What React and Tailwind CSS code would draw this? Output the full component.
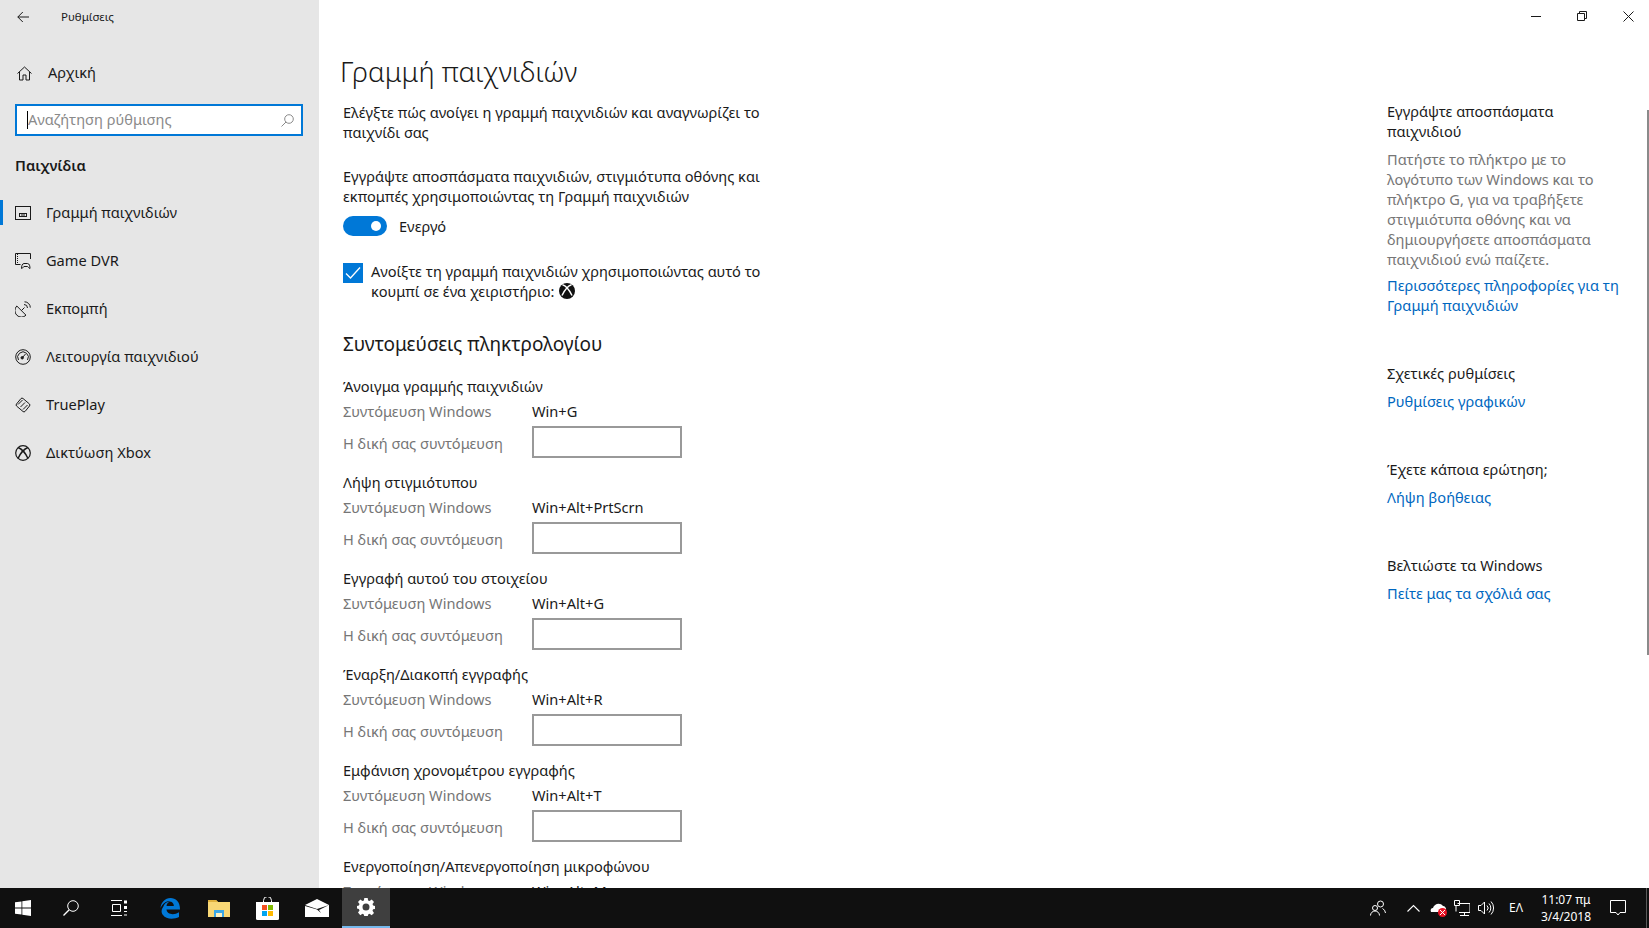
const font = { fontFamily: '"Noto Sans", sans-serif' };

const navItems = [
  { label: 'Γραμμή παιχνιδιών', icon: 'bar', active: true },
  { label: 'Game DVR', icon: 'dvr' },
  { label: 'Εκπομπή', icon: 'broadcast' },
  { label: 'Λειτουργία παιχνιδιού', icon: 'mode' },
  { label: 'TruePlay', icon: 'trueplay' },
  { label: 'Δικτύωση Xbox', icon: 'xbox' },
];

const shortcuts = [
  { title: 'Άνοιγμα γραμμής παιχνιδιών', keys: 'Win+G' },
  { title: 'Λήψη στιγμιότυπου', keys: 'Win+Alt+PrtScrn' },
  { title: 'Εγγραφή αυτού του στοιχείου', keys: 'Win+Alt+G' },
  { title: 'Έναρξη/Διακοπή εγγραφής', keys: 'Win+Alt+R' },
  { title: 'Εμφάνιση χρονομέτρου εγγραφής', keys: 'Win+Alt+T' },
  { title: 'Ενεργοποίηση/Απενεργοποίηση μικροφώνου', keys: 'Win+Alt+M' },
];

const asideBlocks = [
  { title: 'Σχετικές ρυθμίσεις', link: 'Ρυθμίσεις γραφικών' },
  { title: 'Έχετε κάποια ερώτηση;', link: 'Λήψη βοήθειας' },
  { title: 'Βελτιώστε τα Windows', link: 'Πείτε μας τα σχόλιά σας' },
];

function NavIcon({ name }) {
  const props = { width: 16, height: 16, viewBox: '0 0 16 16', fill: 'none', stroke: '#1a1a1a', strokeWidth: 1 };
  if (name === 'bar') {
    return (
      <svg {...props}>
        <rect x="0.5" y="1.5" width="15" height="13" />
        <rect x="4.5" y="8.5" width="7" height="3" />
        <path d="M7 9v2M9 9v2" />
      </svg>
    );
  }
  if (name === 'dvr') {
    return (
      <svg {...props}>
        <path d="M5.500 11.500H.5v-11h15V6" />
        <path d="M2.500 1v10" strokeDasharray="1 1" />
        <path d="M6.500 15.500c0-2 .5-5 2.500-5h3.500c2 0 2.500 3 2.500 5-1 0-1.500-1.500-2.500-2H9c-1 .5-1.500 2-2.500 2z" />
      </svg>
    );
  }
  if (name === 'broadcast') {
    return (
      <svg {...props}>
        <path d="M1.800 5L11 14.200A6.300 6.300 0 0 1 1.800 5z" />
        <path d="M6.500 9.500l3-3" />
        <path d="M9 3.500a3.500 3.500 0 0 1 3.500 3.500M9.500.8a5.800 5.800 0 0 1 5.800 5.800" />
      </svg>
    );
  }
  if (name === 'mode') {
    return (
      <svg {...props}>
        <circle cx="8" cy="8" r="7.300" />
        <path d="M3.500 11a5.300 5.300 0 1 1 9 0" />
        <circle cx="7.200" cy="8.800" r="1.200" fill="#1a1a1a" />
        <path d="M7.500 8.500L10.500 5" />
      </svg>
    );
  }
  if (name === 'trueplay') {
    return (
      <svg {...props}>
        <path d="M6 1.500a1.500 1.500 0 0 1 2 0L14.500 7a1.500 1.500 0 0 1 0 2L10 14.500a1.500 1.500 0 0 1-2 0L1.500 9a1.500 1.500 0 0 1 0-2z" />
        <path d="M3 7.500L7.500 3M5.500 10L10 5.500M8 12.500l4.500-4.500" />
      </svg>
    );
  }
  return (
    <svg {...props} strokeWidth="1.200">
      <circle cx="8" cy="8" r="7.300" />
      <path d="M3 2.500C6 3.500 10.500 8 13 13.500M13 2.500C10 3.500 5.500 8 3 13.500" strokeWidth="1.400" />
    </svg>
  );
}

function Toggle() {
  return (
    <div className="flex h-5 w-11 items-center justify-end rounded-full bg-[#0078d7] pr-[6px]">
      <div className="h-[10px] w-[10px] rounded-full bg-white" />
    </div>
  );
}

function ShortcutGroup({ title, keys }) {
  return (
    <div className="h-24 shrink-0">
      <div className="h-[29px] leading-5 text-[#1a1a1a]">{title}</div>
      <div className="flex h-[14px] items-center">
        <span className="w-[189px] text-[#767676]">Συντόμευση Windows</span>
        <span className="text-[#1a1a1a]">{keys}</span>
      </div>
      <div className="mt-[1px] flex items-center">
        <span className="mt-[11px] w-[189px] text-[#767676]">Η δική σας συντόμευση</span>
        <div className="mt-[6px] h-8 w-[150px] border-2 border-[#999999] bg-white" />
      </div>
    </div>
  );
}

function Sidebar() {
  return (
    <aside className="flex w-[319px] shrink-0 flex-col bg-[#e6e6e6] text-[14.6px] text-[#1a1a1a]">
      <div className="flex h-[33px] items-center pl-[17px]">
        <svg width="12" height="12" viewBox="0 0 12 12" fill="none" stroke="#1a1a1a" strokeWidth="1">
          <path d="M12 6H.8M5.800 1L.8 6l5 5" />
        </svg>
        <span className="ml-8 text-[11.5px]">Ρυθμίσεις</span>
      </div>
      <div className="mt-5 flex h-10 items-center pl-[17px]">
        <svg width="15" height="15" viewBox="0 0 15 15" fill="none" stroke="#1a1a1a" strokeWidth="1">
          <path d="M.5 7.500L7.500 1l7 6.500M2.500 6v8h3.500V9h3v5h3.500V6" />
        </svg>
        <span className="ml-4">Αρχική</span>
      </div>
      <div className="mt-[11px] mr-4 ml-[15px] flex h-8 items-center border-2 border-[#0078d7] bg-white pr-[7px] pl-[10px]">
        <div className="h-[18px] w-px bg-black" />
        <span className="flex-1 pb-[1px] text-[#8a8a8a]">Αναζήτηση ρύθμισης</span>
        <svg width="13" height="13" viewBox="0 0 13 13" fill="none" stroke="#8a8a8a" strokeWidth="1">
          <circle cx="8" cy="5" r="4.300" />
          <path d="M5 8l-4.500 4.500" />
        </svg>
      </div>
      <div className="mt-[18px] flex h-6 items-center pl-[15px] font-semibold">Παιχνίδια</div>
      <nav className="mt-[11px] flex flex-col">
        {navItems.map((item) => (
          <div key={item.label} className="relative flex h-12 items-center pl-[15px]">
            {item.active && <div className="absolute top-[11px] left-0 h-[25px] w-[3px] bg-[#0078d7]" />}
            <NavIcon name={item.icon} />
            <span className="ml-[15px]">{item.label}</span>
          </div>
        ))}
      </nav>
    </aside>
  );
}

function Content() {
  return (
    <div className="w-[420px] shrink-0 pl-[24px]">
      <h1 className="-ml-[3px] text-[27.5px] leading-9 font-light text-[#1a1a1a]">Γραμμή παιχνιδιών</h1>
      <p className="mt-[12px] leading-5 whitespace-nowrap">
        Ελέγξτε πώς ανοίγει η γραμμή παιχνιδιών και αναγνωρίζει το
        <br />
        παιχνίδι σας
      </p>
      <p className="mt-[24px] leading-5 whitespace-nowrap">
        Εγγράψτε αποσπάσματα παιχνιδιών, στιγμιότυπα οθόνης και
        <br />
        εκπομπές χρησιμοποιώντας τη Γραμμή παιχνιδιών
      </p>
      <div className="mt-[9px] flex items-center gap-3">
        <Toggle />
        <span className="pt-[1px]">Ενεργό</span>
      </div>
      <div className="mt-[25px] flex items-start gap-2">
        <div className="flex h-5 w-5 shrink-0 items-center justify-center bg-[#0078d7]">
          <svg width="16" height="14" viewBox="0 0 16 14" fill="none" stroke="white" strokeWidth="1.300">
            <path d="M1 7.500l4.500 4.500L15 1.500" />
          </svg>
        </div>
        <div className="-mt-[2px] leading-5 whitespace-nowrap">
          Ανοίξτε τη γραμμή παιχνιδιών χρησιμοποιώντας αυτό το
          <br />
          <span className="inline-flex items-center gap-[5px]">
            κουμπί σε ένα χειριστήριο:
            <svg width="16" height="16" viewBox="0 0 16 16">
              <circle cx="8" cy="8" r="8" fill="#111" />
              <path d="M3.500 1.800C6 2.500 10 6.500 13 12.500M12.500 1.800C10 2.500 6 6.500 3 12.500" fill="none" stroke="white" strokeWidth="1.500" />
            </svg>
          </span>
        </div>
      </div>
      <h2 className="mt-[29px] text-[19px] leading-7 whitespace-nowrap text-[#1a1a1a]">Συντομεύσεις πληκτρολογίου</h2>
      <div className="mt-[18px] flex flex-col whitespace-nowrap">
        {shortcuts.map((s) => (
          <ShortcutGroup key={s.title} title={s.title} keys={s.keys} />
        ))}
      </div>
    </div>
  );
}

function RightColumn() {
  return (
    <div className="mt-[101px] w-[262px] shrink-0">
      <div className="leading-5">
        Εγγράψτε αποσπάσματα
        <br />
        παιχνιδιού
      </div>
      <p className="mt-2 leading-5 whitespace-nowrap text-[#767676]">
        Πατήστε το πλήκτρο με το
        <br />
        λογότυπο των Windows και το
        <br />
        πλήκτρο G, για να τραβήξετε
        <br />
        στιγμιότυπα οθόνης και να
        <br />
        δημιουργήσετε αποσπάσματα
        <br />
        παιχνιδιού ενώ παίζετε.
      </p>
      <div className="mt-[6px] leading-5 whitespace-nowrap text-[#0067c0]">
        Περισσότερες πληροφορίες για τη
        <br />
        Γραμμή παιχνιδιών
      </div>
      {asideBlocks.map((b) => (
        <div key={b.title} className="mt-[48px] first:mt-[57px]">
          <div className="leading-5">{b.title}</div>
          <div className="mt-2 leading-5 text-[#0067c0]">{b.link}</div>
        </div>
      ))}
    </div>
  );
}

function WindowButtons() {
  return (
    <div className="absolute top-0 -right-[2px] flex h-8">
      <div className="flex w-[46px] items-center justify-center">
        <svg width="10" height="10" viewBox="0 0 10 10" stroke="#1a1a1a"><path d="M0 5.500h10" /></svg>
      </div>
      <div className="flex w-[46px] items-center justify-center">
        <svg width="10" height="10" viewBox="0 0 10 10" fill="none" stroke="#1a1a1a">
          <path d="M.5 2.500h7v7h-7zM2.500 2.500v-2h7v7h-2" />
        </svg>
      </div>
      <div className="flex w-[46px] items-center justify-center">
        <svg width="11" height="11" viewBox="0 0 11 11" stroke="#1a1a1a"><path d="M.5.5l10 10M10.500.5l-10 10" /></svg>
      </div>
    </div>
  );
}

function Taskbar() {
  return (
    <footer className="flex h-10 shrink-0 items-center bg-[#101010] text-white">
      <div className="flex w-[46px] justify-center">
        <svg width="16" height="16" viewBox="0 0 16 16" fill="white">
          <path d="M0 2.300l6.500-.9v6.200H0zM7.300 1.300L16 0v7.600H7.300zM0 8.400h6.500v6.200L0 13.700zM7.300 8.400H16V16l-8.700-1.300z" />
        </svg>
      </div>
      <div className="flex w-[50px] justify-center">
        <svg width="16" height="16" viewBox="0 0 16 16" fill="none" stroke="white" strokeWidth="1">
          <circle cx="10" cy="6" r="5.300" />
          <path d="M6.200 9.800L.5 15.500" strokeWidth="1.300" />
        </svg>
      </div>
      <div className="flex w-12 justify-center pr-[2px]">
        <svg width="16" height="16" viewBox="0 0 16 16" fill="none" stroke="white" strokeWidth="1">
          <path d="M0 .5h11M0 15.500h11M1.500 4.500h8v7h-8z" />
          <path d="M13 .5h3v3h-3zM13 6h3v3h-3z" fill="white" stroke="none" />
          <path d="M13 11.500h3M13 15h3" />
        </svg>
      </div>
      <div className="flex w-[52px] justify-center">
        <svg width="20" height="21" viewBox="0 0 20 21">
          <path d="M10.500 0C15.500 0 20 3.500 20 11.500H6.500c.3 5 7.500 6 12.500 2.800v4.800c-5 2.500-13 2.500-16-2C.5 14 1.500 10 4.500 7.500 3 10 3 10 3 10 4 4 9 3.500 11 3.500c-3 .3-4.300 2.500-4.500 4.500h7.300C14 5 11 2.700 7.800 3.300 5 3.800 2 6.500.5 10 1 4.500 5 0 10.500 0z" fill="#0078d7" />
        </svg>
      </div>
      <div className="flex w-[46px] justify-center">
        <svg width="22" height="18" viewBox="0 0 22 18">
          <path d="M0 1h8l2 2h12v15H0z" fill="#f8d775" />
          <path d="M0 1h8l2 2H6L5 3H0z" fill="#e0b13d" />
          <path d="M6 11h10v7h-2v-4H8v4H6z" fill="#3ba7e6" />
          <path d="M8 14h6v4H8z" fill="#fdf0c0" />
        </svg>
      </div>
      <div className="flex w-[50px] justify-center">
        <svg width="23" height="23" viewBox="0 0 23 23">
          <path d="M7.500 5V3.500a4 4 0 0 1 8 0V5" fill="none" stroke="white" strokeWidth="1" />
          <path d="M0 5h23v16.500a1.500 1.500 0 0 1-1.500 1.500h-20A1.500 1.500 0 0 1 0 21.500z" fill="white" />
          <path d="M6 8h5v5H6z" fill="#f25022" />
          <path d="M12 8h5v5h-5z" fill="#7fba00" />
          <path d="M6 14h5v5H6z" fill="#00a4ef" />
          <path d="M12 14h5v5h-5z" fill="#ffb900" />
        </svg>
      </div>
      <div className="flex w-[50px] justify-center">
        <svg width="24" height="18" viewBox="0 0 24 18">
          <path d="M12 0l12 6v12H0V6z" fill="white" />
          <path d="M0 6l12 4 12-4-10 5 2 3-4-3.500L0 7z" fill="#101010" />
        </svg>
      </div>
      <div className="flex h-10 w-12 items-center justify-center border-b-2 border-[#76b9ed] bg-[#3f3f3f]">
        <svg width="18" height="18" viewBox="0 0 18 18" fill="white">
          <path fillRule="evenodd" d="M7.300 0h3.400l.4 2.500 1.500.6L14.700 1.600 17 4l-1.500 2.100.6 1.500 2.500.4v2.900l-2.500.4-.6 1.500 1.500 2.100-2.300 2.400-2.100-1.500-1.500.6-.4 2.500H7.300l-.4-2.500-1.500-.6-2.100 1.500L1 14.500l1.500-2.100-.6-1.500-2.500-.4V8l2.500-.4.6-1.500L1 4l2.300-2.400 2.100 1.500 1.500-.6zM9 5.500a3.500 3.500 0 1 0 0 7 3.500 3.500 0 0 0 0-7z" />
        </svg>
      </div>
      <div className="flex flex-1 items-center justify-end">
        <svg width="16" height="16" viewBox="0 0 16 16" fill="none" stroke="white" strokeWidth="1">
          <circle cx="10.500" cy="4" r="3" />
          <path d="M15.500 13a5.500 5.500 0 0 0-3-4.500" />
          <circle cx="5" cy="8" r="2.500" />
          <path d="M.5 15.500a4.500 4.500 0 0 1 9 0" />
        </svg>
        <svg className="ml-[21px]" width="13" height="8" viewBox="0 0 13 8" fill="none" stroke="white" strokeWidth="1.100">
          <path d="M.5 7.500l6-6 6 6" />
        </svg>
        <div className="relative ml-[10px] h-4 w-4">
          <svg width="16" height="14" viewBox="0 0 16 14" fill="white">
            <path d="M1 12c-1-2 0-4 2-4 1-4 7-6 10-2 2 0 3 2 3 3l-1 3z" />
          </svg>
          <div className="absolute right-[-1px] bottom-[-1px] flex h-[9px] w-[9px] items-center justify-center rounded-full bg-[#e81123]">
            <svg width="5" height="5" viewBox="0 0 5 5" stroke="white"><path d="M0 0l5 5M5 0L0 5" /></svg>
          </div>
        </div>
        <svg className="ml-2" width="16" height="16" viewBox="0 0 16 16" fill="none" stroke="white" strokeWidth="1">
          <path d="M3.500 3.500H16v9H5M10.500 12.500v3M6 15.500h9" />
          <path d="M.5.500h5v5h-5zM2 5.500v6" />
        </svg>
        <svg className="ml-2" width="16" height="16" viewBox="0 0 16 16" fill="none" stroke="white" strokeWidth="1">
          <path d="M.5 5.500h2.500L6.500 2v12L3 10.500H.5z" />
          <path d="M9 5.500a3.500 3.500 0 0 1 0 5M11 3.500a6.500 6.500 0 0 1 0 9M13 1.500a9.500 9.500 0 0 1 0 13" />
        </svg>
        <span className="ml-[15px] text-xs">ΕΛ</span>
        <div className="ml-[13px] flex w-[60px] flex-col items-center text-xs leading-[17px]">
          <span>11:07 πμ</span>
          <span>3/4/2018</span>
        </div>
        <svg className="ml-[14px]" width="16" height="16" viewBox="0 0 16 16" fill="none" stroke="white" strokeWidth="1">
          <path d="M.5.500h15v12H10L8 15l-2-2.500H.5z" />
        </svg>
        <div className="ml-5 h-10 w-px bg-[#5a5a5a]" />
        <div className="w-[2px]" />
      </div>
    </footer>
  );
}

export default function App() {
  return (
    <div className="flex h-[928px] w-[1649px] flex-col overflow-hidden bg-white text-[14.6px]" style={font}>
      <div className="flex h-[888px] min-h-0">
        <Sidebar />
        <main className="relative flex flex-1 justify-between overflow-hidden text-[#1a1a1a]">
          <WindowButtons />
          <div className="pt-[54px]">
            <Content />
          </div>
          <RightColumn />
          <div className="absolute top-[110px] right-0 h-[545px] w-[2px] bg-[#8a8a8a]" />
        </main>
      </div>
      <Taskbar />
    </div>
  );
}
